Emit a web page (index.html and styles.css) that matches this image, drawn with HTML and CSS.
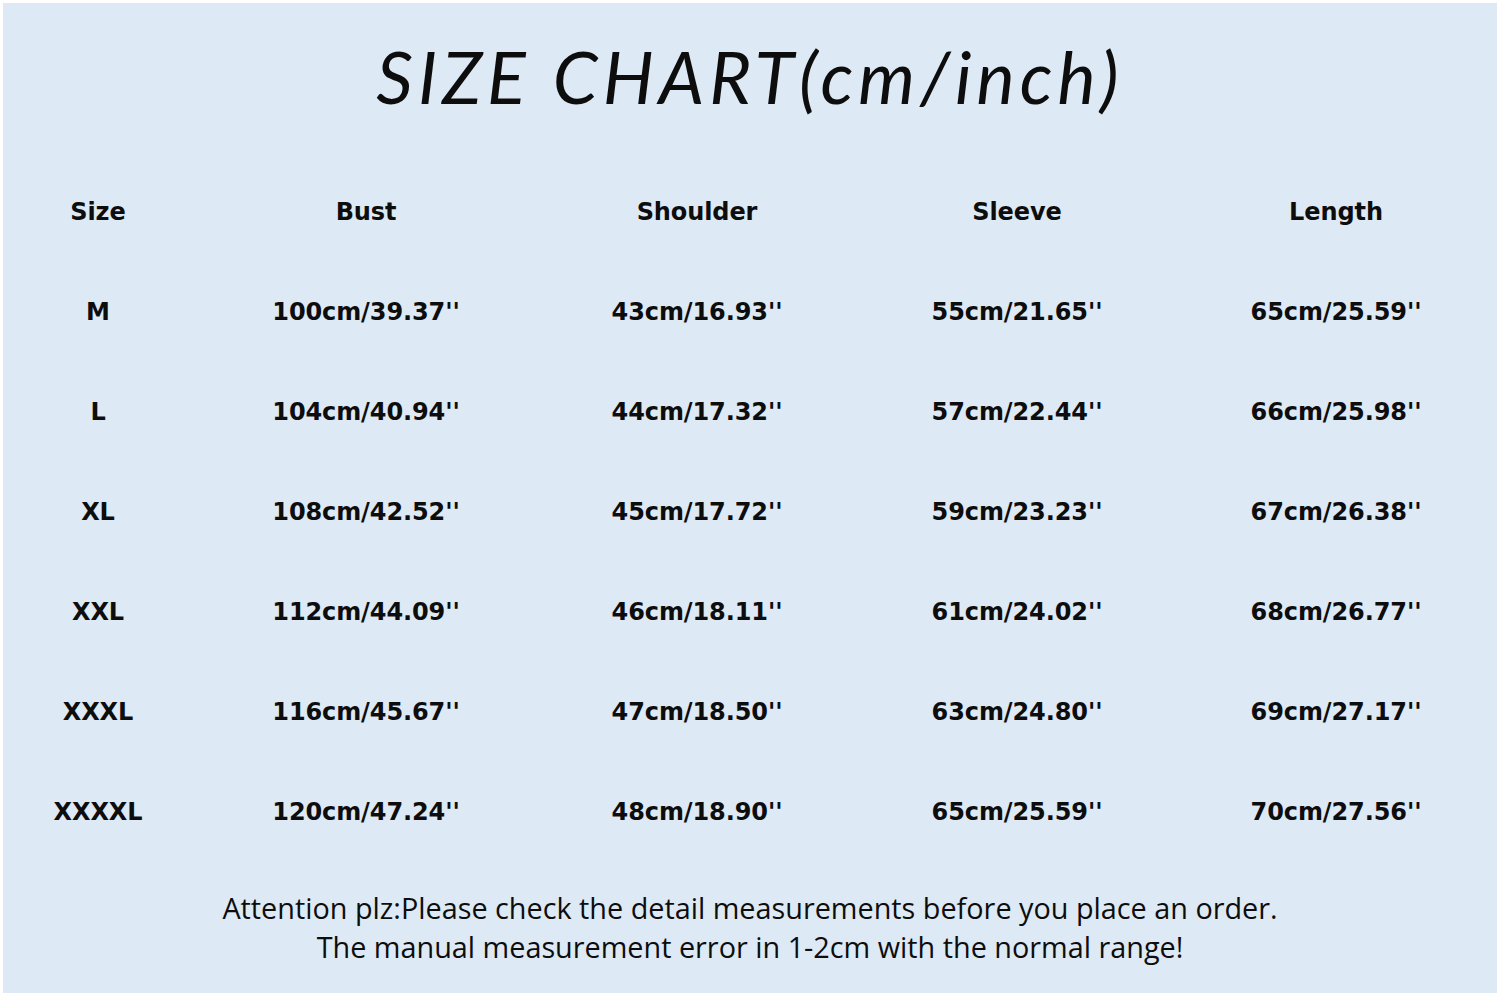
FILE: index.html
```html
<!DOCTYPE html>
<html>
<head>
<meta charset="utf-8">
<link rel="stylesheet" href="styles.css">
</head>
<body>
<div class="panel">
  <h1 class="title">SIZE CHART(cm/inch)</h1>
  <div class="chart">
    <div class="cell head">Size</div><div class="cell head">Bust</div><div class="cell head">Shoulder</div><div class="cell head">Sleeve</div><div class="cell head">Length</div>
    <div class="cell">M</div><div class="cell">100cm/39.37''</div><div class="cell">43cm/16.93''</div><div class="cell">55cm/21.65''</div><div class="cell">65cm/25.59''</div>
    <div class="cell">L</div><div class="cell">104cm/40.94''</div><div class="cell">44cm/17.32''</div><div class="cell">57cm/22.44''</div><div class="cell">66cm/25.98''</div>
    <div class="cell">XL</div><div class="cell">108cm/42.52''</div><div class="cell">45cm/17.72''</div><div class="cell">59cm/23.23''</div><div class="cell">67cm/26.38''</div>
    <div class="cell">XXL</div><div class="cell">112cm/44.09''</div><div class="cell">46cm/18.11''</div><div class="cell">61cm/24.02''</div><div class="cell">68cm/26.77''</div>
    <div class="cell">XXXL</div><div class="cell">116cm/45.67''</div><div class="cell">47cm/18.50''</div><div class="cell">63cm/24.80''</div><div class="cell">69cm/27.17''</div>
    <div class="cell">XXXXL</div><div class="cell">120cm/47.24''</div><div class="cell">48cm/18.90''</div><div class="cell">65cm/25.59''</div><div class="cell">70cm/27.56''</div>
  </div>
  <div class="note">
    <p>Attention plz:Please check the detail measurements before you place an order.</p>
    <p>The manual measurement error in 1-2cm with the normal range!</p>
  </div>
</div>
</body>
</html>
```

FILE: styles.css
```css
html, body {
  margin: 0;
  padding: 0;
  background: #ffffff;
}
.panel {
  margin: 3px 3px 0 3px;
  height: 990px;
  background: #dde9f5;
  display: flex;
  flex-direction: column;
  box-sizing: border-box;
  color: #0d0d0d;
}
.title {
  margin: 0;
  height: 158px;
  display: flex;
  align-items: center;
  justify-content: center;
  font-family: "Lato", sans-serif;
  font-weight: 400;
  font-style: italic;
  font-size: 72px;
  letter-spacing: 5px;
  color: #0d0d0d;
  padding-bottom: 12px;
  box-sizing: border-box;
}
.chart {
  display: grid;
  grid-template-columns: 190px 346px 316px 324px 314px;
  grid-auto-rows: 100px;
}
.cell {
  display: flex;
  align-items: center;
  justify-content: center;
  padding-top: 2px;
  font-family: "DejaVu Sans", sans-serif;
  font-weight: 700;
  font-size: 24px;
  letter-spacing: -0.1px;
}
.note {
  padding-top: 27px;
  text-align: center;
  font-family: "Open Sans", sans-serif;
  font-size: 28.8px;
  line-height: 39px;
}
.note p {
  margin: 0;
}
```
